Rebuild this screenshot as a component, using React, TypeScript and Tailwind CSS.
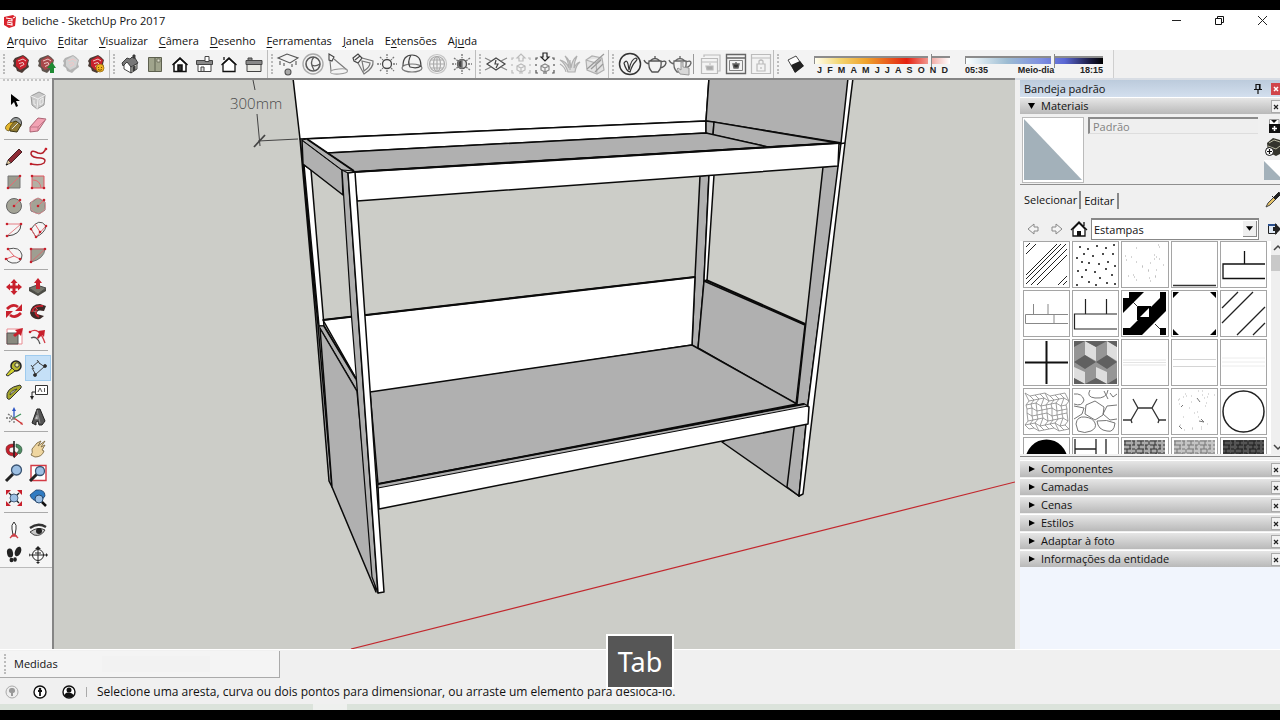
import { useState, type ReactNode } from 'react';

type Tool = { name: string; art: ReactNode };

const MENUS = [
  ['', 'A', 'rquivo'],
  ['', 'E', 'ditar'],
  ['', 'V', 'isualizar'],
  ['', 'C', 'âmera'],
  ['', 'D', 'esenho'],
  ['', 'F', 'erramentas'],
  ['', 'J', 'anela'],
  ['E', 'x', 'tensões'],
  ['Aj', 'u', 'da'],
];

const MONTHS = ['J', 'F', 'M', 'A', 'M', 'J', 'J', 'A', 'S', 'O', 'N', 'D'];
const CLOSED_PANELS = ['Componentes', 'Camadas', 'Cenas', 'Estilos', 'Adaptar à foto', 'Informações da entidade'];

function Svg({ children }: { children: ReactNode }) {
  return (
    <svg viewBox="0 0 24 24" width="24" height="24" fill="none" className="shrink-0" aria-hidden="true">
      {children}
    </svg>
  );
}

/* ---------- horizontal toolbar art ---------- */

const RED = '#c8202c';

function BoxArt({ main = RED, dark = '#4b3a34', children }: { main?: string; dark?: string; children?: ReactNode }) {
  return (
    <>
      <path d="M4 9l2-3 8-3 3 2 3 3-1 4 1 3-4 3-3 3-5-2-1-3-3-2 1-3z" fill={dark} />
      <path d="M7 8l7-4 5 4-2 7-6 3-4-4z" fill={main} />
      <path d="M9 9l5-2 3 2M10 11.500l4-1 1 2-4 2" stroke="#efc8c8" strokeWidth="1" />
      {children}
    </>
  );
}

const warehouse: Tool[] = [
  { name: '3D Warehouse', art: <BoxArt /> },
  {
    name: 'Compartilhar modelo',
    art: (
      <BoxArt main="#a8484a" dark="#5e544e">
        <path d="M16 21v-5h-3l5-6 4 6h-2v5z" fill="#1f8a34" />
      </BoxArt>
    ),
  },
  { name: 'Compartilhar componente', art: <BoxArt main="#d2d2d2" dark="#b3b3b3" /> },
  {
    name: 'Extension Warehouse',
    art: (
      <BoxArt>
        <circle cx="16" cy="16" r="4" fill="#f0b321" stroke="#8c6414" strokeWidth=".7" />
        <path d="M14.500 15v1M17.500 15v1M14 17.500q2 1.500 4 0" stroke="#5b3b00" strokeWidth=".8" />
      </BoxArt>
    ),
  },
];

const views: Tool[] = [
  {
    name: 'Iso',
    art: (
      <g stroke="#333" strokeWidth=".9" strokeLinejoin="round">
        <path d="M6 12v5l7 4v-7L9 9z" fill="#fff" />
        <path d="M13 14l6-3v6l-6 4z" fill="#c5c5bd" />
        <path d="M4 11l5-5 3 1 2-2 3 1 3 5-7 4-4-5-4 4z" fill="#777" />
        <path d="M15 15l2-1v4l-2 1zM15 3h2v3h-2z" fill="#444" />
      </g>
    ),
  },
  {
    name: 'Superior',
    art: (
      <>
        <path d="M5.500 5.500h13v14h-13z" fill="#a0a48c" stroke="#5d604f" />
        <path d="M12 5v15" stroke="#5d604f" />
        <path d="M14 7h3v3h-3z" fill="#dcdccb" stroke="#5d604f" strokeWidth=".7" />
      </>
    ),
  },
  {
    name: 'Frente',
    art: (
      <g stroke="#111" strokeWidth="1.500">
        <path d="M6 12v7.500h12V12l-6-5.500z" fill="#fff" />
        <path d="M4.500 13 12 6l7.500 7" />
        <path d="M10 19v-6h4v6z" fill="#333" />
      </g>
    ),
  },
  {
    name: 'Direita',
    art: (
      <g stroke="#444">
        <path d="M6 12.500h13v7H6z" fill="#fff" />
        <path d="M4.500 8.500h16v4h-16z" fill="#888" />
        <path d="M13 4.500h4v5h-4z" fill="#fff" />
        <path d="M9 15h3v4.500H9z" fill="#ddd" />
      </g>
    ),
  },
  {
    name: 'Voltar',
    art: (
      <g stroke="#111" strokeWidth="1.300">
        <path d="M6 12v7.500h12V12l-6-5.500z" fill="#fff" />
        <path d="M4.500 13 12 6l7.500 7" />
        <path d="M7 8V5" />
      </g>
    ),
  },
  {
    name: 'Esquerda',
    art: (
      <g stroke="#444">
        <path d="M5 12.500h14v7H5z" fill="#e9e9e4" />
        <path d="M4 8.500h16v4H4zM6 6h4v2.500H6z" fill="#888" />
      </g>
    ),
  },
];

const lights: Tool[] = [
  {
    name: 'Luz retangular',
    art: (
      <g stroke="#555" strokeWidth="1.100">
        <path d="M2 6l9-4 11 4-8 5zM4 9v4M20 9v4M8 11v3M16 12v3" />
        <circle cx="12" cy="20" r="3" fill="#a9a9a9" />
      </g>
    ),
  },
  {
    name: 'Luz esférica',
    art: (
      <g stroke="#5a5a5a">
        <circle cx="12" cy="12" r="10" stroke="#aaa" strokeWidth="1.400" />
        <circle cx="12" cy="12" r="7" strokeWidth="1.600" />
        <path d="M13 5q-5 5 0 13M11 13q3 2 8-1" strokeWidth="1.300" />
      </g>
    ),
  },
  {
    name: 'Luz spot',
    art: (
      <g stroke="#777" strokeWidth="1.100">
        <path d="M3 2l5 3-2 4-3-1z" stroke="#444" />
        <path d="M8 7l13 11M4 9l1 10" />
        <ellipse cx="13" cy="19.500" rx="8.500" ry="2.500" stroke="#999" transform="rotate(-5 13 19)" />
      </g>
    ),
  },
  {
    name: 'Luz IES',
    art: (
      <g stroke="#777" strokeWidth="1.200">
        <path d="M2 6l5-4 4 4-4 5-4-2zM4 8l5-4" stroke="#444" />
        <path d="M11 6l11 3q1 7-9 13L7 11M11 9l8 2q0 4-6 8z" />
      </g>
    ),
  },
  {
    name: 'Luz omni',
    art: (
      <g stroke="#777" strokeWidth="1.300">
        <circle cx="12" cy="12" r="4.500" stroke="#444" />
        <path d="M12 2v4M12 18v4M2 12h4M18 12h4M5 5l3 3M16 16l3 3M19 5l-3 3M5 19l3-3" strokeDasharray="2 1" />
      </g>
    ),
  },
  {
    name: 'Luz domo',
    art: (
      <g stroke="#444" strokeWidth="1.200">
        <ellipse cx="12" cy="16" rx="10" ry="4" stroke="#777" />
        <path d="M3 14q0-11 9-11t9 11q-4 3-11 1Q7 10 11 3" />
      </g>
    ),
  },
  {
    name: 'Esfera',
    art: (
      <g stroke="#aaa" strokeWidth="1.200">
        <circle cx="12" cy="12" r="9.500" stroke="#c4c4c4" />
        <circle cx="12" cy="12" r="7.500" />
        <ellipse cx="12" cy="12" rx="3.500" ry="7.500" />
        <path d="M12 4v16M4 12h16M6 8h12M6 16h12" />
      </g>
    ),
  },
  {
    name: 'Intensidade da luz',
    art: (
      <g stroke="#777" strokeWidth="1.400">
        <path d="M12 2v4M12 18v4M2 12h4M18 12h4M4 6l4 3M16 15l4 3M20 6l-4 3M4 18l4-3" strokeDasharray="2 1" />
        <circle cx="12" cy="12" r="4.500" fill="#ddd" stroke="#555" />
        <path d="M12 8a4 4 0 0 0 0 8z" fill="#444" />
      </g>
    ),
  },
];

const corners = 'M3 8V6h2M19 6h2v2M3 18v3h2M21 18v3h-2M3 12v2M21 12v2M10 21h4';

const objects: Tool[] = [
  {
    name: 'Plano infinito',
    art: (
      <g stroke="#444" strokeWidth="1.200">
        <path d="M3 12l9-6 9 6-9 6zM12 8l-1 4h3l-2 4" />
        <path d="M1 6l6 3M17 9l6-3M1 18l6-3M17 15l6 3" stroke="#888" />
      </g>
    ),
  },
  {
    name: 'Exportar proxy',
    art: (
      <g stroke="#bbb" strokeWidth="1.200">
        <path d={corners} />
        <path d="M10 9V6H8l4-4 4 4h-2v3zM8 14l4-2 4 2v4l-4 2-4-2zM8 14l4 2 4-2M12 16v4" />
      </g>
    ),
  },
  {
    name: 'Importar proxy',
    art: (
      <g stroke="#555" strokeWidth="1.200">
        <path d={corners} />
        <path d="M10 1v4H8l4 4 4-4h-2V1z" stroke="#222" />
        <path d="M8 14l4-2 4 2v4l-4 2-4-2zM8 14l4 2 4-2M12 16v4" stroke="#888" />
      </g>
    ),
  },
  {
    name: 'Pelo',
    art: (
      <g stroke="#b0b0b0" strokeWidth="1.200">
        <path d="M10 20Q7 11 2 8q6 1 9 8-1-8-4-12 5 4 6 12 1-8 6-12-3 6-3 12 2-5 6-6-4 3-5 10z" fill="#ddd" />
        <path d="M2 12q5 3 6 8M12 8v10" />
      </g>
    ),
  },
  {
    name: 'Recorte',
    art: (
      <g stroke="#b0b0b0" strokeWidth="1.200">
        <path d="M3 8l6-4 10 2 2 12-7 4-10-4zM3 8l10 3 6-5M13 11l1 11" fill="#e2e2e2" />
        <path d="M4 17L21 2M8 17l10-9M12 20l8-8" stroke="#999" />
      </g>
    ),
  },
];

const pot = 'M6 9h12q1 7-3 11H9Q5 16 6 9zM7 9q5-5 10 0M12 6V4M6 12Q2 11 1 8M18 10q5-2 5 1-1 4-6 5';

const render: Tool[] = [
  {
    name: 'Editor de materiais',
    art: (
      <>
        <circle cx="12" cy="12" r="10.500" stroke="#333" strokeWidth="1.500" />
        <path d="M6 11q3-4 4 1l1 6q2-11 7-12 2 1 0 3-4 4-6 11-4-1-6-9z" stroke="#333" strokeWidth="1.200" />
      </>
    ),
  },
  { name: 'Renderizar', art: <path d={pot} stroke="#555" strokeWidth="1.300" /> },
  {
    name: 'Renderização interativa',
    art: (
      <>
        <path d={pot} stroke="#666" strokeWidth="1.300" />
        <path d="M12 22l-3-5 1-1 3 2v-8h2v5l6 1v7z" fill="#d8d8d8" stroke="#999" />
      </>
    ),
  },
];

const frames: Tool[] = [
  {
    name: 'Lote',
    art: (
      <g stroke="#bbb" strokeWidth="1.200">
        <path d="M5 5V3h16v16h-2M2.500 6.500h16v15h-16zM3 10h15" />
        <path d="M7 14h7v4H8zM10 12h2" fill="#aaa" />
      </g>
    ),
  },
  {
    name: 'Frame buffer',
    art: (
      <g stroke="#666" strokeWidth="1.400">
        <path d="M2.500 2.500h19v19h-19zM3 6h18" />
        <path d="M5.500 8.500h13v10h-13z" strokeWidth=".8" />
        <path d="M9 12h6l-1 4h-4zM12 10v2" fill="#333" />
      </g>
    ),
  },
  {
    name: 'Bloquear orientação',
    art: (
      <g stroke="#bbb" strokeWidth="1.200">
        <path d="M2.500 2.500h19v19h-19zM3 6h18" />
        <path d="M8 12h8v7H8zM10 12V9q2-2 4 0v3M12 15v2" />
      </g>
    ),
  },
];

const shadowTool: Tool = {
  name: 'Sombras',
  art: (
    <>
      <path d="M4 8l8-4 7 10-8 6z" fill="#fff" stroke="#333" strokeWidth=".9" />
      <path d="M7 13l9-4 4 5-9 7z" fill="#222" />
    </>
  ),
};

/* ---------- side toolbar art ---------- */

const dot = (x: number, y: number) => <circle key={`${x}-${y}`} cx={x} cy={y} r="1.300" fill={RED} />;

const sideGroups: Tool[][] = [
  [
    { name: 'Selecionar', art: <path d="M9 6v11l3-3 2 5 2-1-2-5h4z" fill="#000" /> },
    {
      name: 'Criar componente',
      art: (
        <g stroke="#999">
          <path d="M5 8l8-4 6 3-1 10-7 4-5-4z" fill="#c9c9c9" />
          <path d="M5 8l7 3 7-4M12 11l-1 10M8 12v4l2 1M14 12l3-2v5l-3 2z" stroke="#eee" />
        </g>
      ),
    },
    {
      name: 'Pintura',
      art: (
        <>
          <circle cx="14" cy="10" r="5.500" fill="#9a9f9f" stroke="#333" />
          <path d="M7 11l7-3 5 4-4 7-7-1z" fill="#8f7a33" stroke="#3b3412" />
          <path d="M4 13q2-4 8-4-4 3-5 9-5-1-3-5z" fill="#e6b82e" stroke="#5c4a12" strokeWidth=".7" />
          <path d="M10 16l6-6" stroke="#ddd" />
        </>
      ),
    },
    {
      name: 'Borracha',
      art: (
        <>
          <path d="M4 14l8-9 8 1-8 12-8 1z" fill="#f2a3b4" stroke="#a35a6a" strokeWidth=".9" />
          <path d="M4 14h8l8-8M12 14v4" stroke="#c4788a" />
        </>
      ),
    },
  ],
  [
    {
      name: 'Linha',
      art: (
        <>
          <path d="M6 15L17 4l3 3L9 18z" fill="#8f2b35" stroke="#3a1518" strokeWidth=".9" />
          <path d="M6 15l3 3-5 2z" fill="#e5c99a" stroke="#333" strokeWidth=".7" />
          <path d="M4 20l2-1" stroke="#000" />
        </>
      ),
    },
    {
      name: 'Mão livre',
      art: (
        <>
          <path d="M5 19q9 2 13-1 3-4-3-5-9 0-10-4 0-5 7-1 6 2 8-5" stroke="#b4202a" strokeWidth="1.500" />
          {dot(5, 19)}
          {dot(20, 4)}
        </>
      ),
    },
    {
      name: 'Retângulo',
      art: (
        <>
          <path d="M6 6h12v12H6z" fill="#9b9b8e" stroke="#777" />
          <path d="M6 18L18 6" stroke="#e76b73" />
          {dot(6, 18)}
          {dot(18, 6)}
        </>
      ),
    },
    {
      name: 'Retângulo girado',
      art: (
        <>
          <path d="M6 6h12v12H6z" fill="#b4b0a4" stroke="#e0555e" />
          <path d="M7 10q7 0 8 8" stroke="#e76b73" />
          {[[6, 6], [6, 18], [18, 18]].map(([x, y]) => dot(x, y))}
        </>
      ),
    },
    {
      name: 'Círculo',
      art: (
        <>
          <circle cx="12" cy="12" r="7.500" fill="#a3a396" stroke="#666" />
          <path d="M12 12l5-5" stroke="#e76b73" />
          {dot(12, 12)}
          {dot(18, 6)}
        </>
      ),
    },
    {
      name: 'Polígono',
      art: (
        <>
          <path d="M12 4l7 4v8l-6 4-8-3-1-8z" fill="#a3a396" stroke="#777" />
          <circle cx="12" cy="12" r="7.500" stroke="#e58b90" strokeWidth=".8" />
          <path d="M12 12l5-5" stroke="#e76b73" />
          {dot(12, 12)}
          {dot(18, 6)}
        </>
      ),
    },
    {
      name: 'Arco',
      art: (
        <>
          <path d="M5 6h14L5 18" stroke="#e57f85" />
          <path d="M19 6q0 11-14 12" stroke="#444" />
          {[[5, 6], [19, 6], [5, 18]].map(([x, y]) => dot(x, y))}
        </>
      ),
    },
    {
      name: 'Arco de 2 pontos',
      art: (
        <>
          <path d="M5 11Q13-1 20 8q-1 7-10 11z" stroke="#555" />
          <path d="M5 11l5 8L20 8M9 6l5 8" stroke="#e0636b" />
          {[[5, 11], [10, 19], [20, 8], [14, 14]].map(([x, y]) => dot(x, y))}
        </>
      ),
    },
    {
      name: 'Arco de 3 pontos',
      art: (
        <>
          <path d="M6 6q12-3 14 6 0 9-10 8-5-1-6-5" stroke="#555" />
          <path d="M6 6l6 7 6 3M12 13l-8 3" stroke="#e0636b" />
          {[[6, 6], [18, 16], [4, 16]].map(([x, y]) => dot(x, y))}
        </>
      ),
    },
    {
      name: 'Pizza',
      art: (
        <>
          <path d="M5 6h14q-1 10-14 13z" fill="#9e9e91" stroke="#777" />
          <path d="M5 6h14L5 19z" stroke="#e0636b" strokeWidth=".8" />
          {[[5, 6], [19, 6], [5, 19]].map(([x, y]) => dot(x, y))}
        </>
      ),
    },
  ],
  [
    {
      name: 'Mover',
      art: (
        <path
          d="M12 4l3.500 4h-2v2.500H16v-2l4 3.500-4 3.500v-2h-2.500V16h2L12 20l-3.500-4h2v-2.500H8v2L4 12l4-3.500v2h2.500V8h-2z"
          fill={RED}
        />
      ),
    },
    {
      name: 'Empurrar/Puxar',
      art: (
        <>
          <path d="M3 13l8-3 9 3-8 6z" fill="#77776c" stroke="#333" strokeWidth=".8" />
          <path d="M3 13v3l9 5 8-5v-3l-8 6z" fill="#4b4b44" />
          <path d="M10 14V8H8l4-5 4 5h-2v6z" fill={RED} />
        </>
      ),
    },
    {
      name: 'Rotacionar',
      art: (
        <g stroke={RED} strokeWidth="2.800">
          <path d="M5 10q6-6 11-2M19 14q-6 6-11 2" />
          <path d="M20 5v7h-7zM4 19v-7h7z" fill={RED} stroke="none" />
        </g>
      ),
    },
    {
      name: 'Siga-me',
      art: (
        <>
          <path d="M4 14Q5 5 14 5l6 2-2 5q-8-2-7 3l7 2-4 3q-8 1-10-6z" fill="#3c2a28" />
          <path d="M6 13Q8 6 17 7M11 10q-4 4 2 8" stroke={RED} strokeWidth="1.800" />
          <path d="M9 8l3 3M7 12l4 1" stroke="#a88" strokeWidth=".8" />
        </>
      ),
    },
    {
      name: 'Escala',
      art: (
        <>
          <path d="M5 5h15v15H5z" fill="#fff" stroke="#e88c92" />
          <path d="M5 9h11v11H5z" fill="#8a8a7f" stroke="#555" />
          <path d="M13 13l-2-2 4-3-2-2 8-2-2 8-2-2z" fill={RED} />
        </>
      ),
    },
    {
      name: 'Equidistância',
      art: (
        <>
          <path d="M4 8q9-6 15 11" stroke="#d33a44" strokeWidth="1.300" />
          <path d="M5 14q6-3 9 6" stroke="#555" strokeWidth="1.300" />
          <path d="M11 14l2-5-1-2 7-1-1 7-2-2-4 4z" fill={RED} />
          {dot(4, 8)}
        </>
      ),
    },
  ],
  [
    {
      name: 'Fita métrica',
      art: (
        <>
          <circle cx="14" cy="10" r="5" fill="#b7b72e" stroke="#222" strokeWidth="1.500" />
          <circle cx="15" cy="9" r="2.200" fill="#ecec9c" stroke="#333" />
          <path d="M10 12l3 3-7 5-2-1z" fill="#d3d32b" stroke="#333" />
        </>
      ),
    },
    {
      name: 'Dimensões',
      art: (
        <g stroke="#444" strokeWidth="1">
          <path d="M6 11l7-6M5 9l3 4M11 4l3 4M9 19L19 10M6 12l4 7M13 7l6 4" />
          <circle cx="9" cy="19" r="1.500" fill="#222" />
          <circle cx="19" cy="10" r="1.500" fill="#222" />
        </g>
      ),
    },
    {
      name: 'Transferidor',
      art: (
        <>
          <path d="M5 18Q3 8 18 5q2 1 1 3L8 19q-2 1-3-1z" fill="#a6a72c" stroke="#333" />
          <path d="M8 15q0-4 7-6z" fill="#f4f4ef" stroke="#333" strokeWidth=".8" />
        </>
      ),
    },
    {
      name: 'Texto',
      art: (
        <>
          <path d="M9.500 5.500h12v9h-12z" fill="#fff" stroke="#333" />
          <path d="M12 12l2-4 2 4M18.500 8v4" stroke="#555" />
          <path d="M9 12H6v6" stroke="#222" />
          <path d="M4 16l2 4 2-4z" fill="#222" />
        </>
      ),
    },
    {
      name: 'Eixos',
      art: (
        <g strokeWidth="1.300">
          <path d="M12 13V5" stroke="#2d55c4" />
          <path d="M12 13l7 5" stroke="#c33" />
          <path d="M12 13l7-4" stroke="#3b8f57" />
          <path d="M4 13h8M12 13v6M6 9l6 4-5 4" stroke="#777" strokeDasharray="2 1" />
          <path d="M10 6l2-4 2 4z" fill="#2d55c4" />
          <path d="M18 19l3 1-1-3z" fill="#c33" />
        </g>
      ),
    },
    {
      name: 'Texto 3D',
      art: (
        <>
          <path d="M6 18L11 4h3l5 12-3 4h-3l-1-4-2 1v3z" fill="#555" stroke="#222" />
          <path d="M11 5l3 13M9 14h3l-1-4z" stroke="#999" fill="#ccc" strokeWidth=".8" />
        </>
      ),
    },
  ],
  [
    {
      name: 'Orbitar',
      art: (
        <>
          <path d="M4 12q0-5 8-5v3q-5 0-5 3t5 3v-2l4 3-4 4v-2q-8 0-8-7z" fill={RED} stroke="#5b1519" strokeWidth=".6" />
          <path d="M20 13q0-5-6-6v3q3 1 3 3l-2 3 3 1q2-2 2-4z" fill="#4f8d63" stroke="#23452f" strokeWidth=".6" />
          <path d="M12 4v16" stroke="#222" strokeWidth="1.600" />
        </>
      ),
    },
    {
      name: 'Panorâmica',
      art: (
        <path
          d="M5 18q2-2 1-6l5-6 4-2-3 5 7-5-4 6 4-2-3 5 2 1q-2 6-9 6z"
          fill="#efd6a0"
          stroke="#7d6a44"
          strokeWidth=".9"
        />
      ),
    },
    {
      name: 'Zoom',
      art: (
        <>
          <path d="M4 20l7-7" stroke="#222" strokeWidth="3" />
          <circle cx="14.500" cy="9" r="5" fill="#9dc0e4" stroke="#3a5473" strokeWidth="1.300" />
        </>
      ),
    },
    {
      name: 'Janela de zoom',
      art: (
        <>
          <path d="M5 4.500h15v15H5z" fill="#fff" stroke="#d33a44" strokeWidth="1.400" />
          <path d="M4 20l7-7" stroke="#222" strokeWidth="3" />
          <circle cx="14" cy="10" r="4.500" fill="#9dc0e4" stroke="#3a5473" strokeWidth="1.300" />
        </>
      ),
    },
    {
      name: 'Modelo centralizado',
      art: (
        <>
          <path d="M7 7l3 3M17 7l-3 3M7 17l3-3M17 17l-3-3" stroke="#222" strokeWidth="1.300" />
          <path d="M4 4h5L4 9zM20 4v5l-5-5zM4 20v-5l5 5zM20 20h-5l5-5z" fill={RED} />
          <circle cx="12" cy="12" r="4" fill="#9dc0e4" stroke="#4a627f" />
        </>
      ),
    },
    {
      name: 'Anterior',
      art: (
        <>
          <path d="M4 9l6-5q9-1 9 6-2 4-7 5-6 0-8-6z" fill="#2f7bc2" stroke="#173a66" strokeWidth=".8" />
          <circle cx="13" cy="13" r="4" fill="#9dc0e4" stroke="#294a70" />
          <path d="M16 16l4 4" stroke="#111" strokeWidth="2.500" />
        </>
      ),
    },
  ],
  [
    {
      name: 'Posicionar câmera',
      art: (
        <>
          <path d="M12 4q3 3 2 7l-1 6h-2l-1-6q-1-4 2-7z" fill="#fff" stroke="#333" />
          <path d="M8 20l4-4 4 4M9 18h6" stroke="#cf4048" strokeWidth="1.400" />
        </>
      ),
    },
    {
      name: 'Girar',
      art: (
        <>
          <path d="M4 10q8-6 16-1" stroke="#333" strokeWidth="2.400" />
          <path d="M4 14q8-6 15-2-4 7-11 5z" fill="#c8c8c8" stroke="#444" />
          <circle cx="13" cy="13" r="3" fill="#222" />
        </>
      ),
    },
    {
      name: 'Passear',
      art: (
        <g fill="#222">
          <ellipse cx="8" cy="10" rx="3" ry="4.500" transform="rotate(-10 8 10)" />
          <ellipse cx="16" cy="8.500" rx="3" ry="5" transform="rotate(22 16 8.500)" />
          <ellipse cx="9.500" cy="17" rx="2" ry="2.200" />
          <ellipse cx="13" cy="16.500" rx="1.800" ry="2.200" />
        </g>
      ),
    },
    {
      name: 'Plano de seção',
      art: (
        <g stroke="#222" strokeWidth="1">
          <circle cx="12" cy="12" r="5.500" fill="#fff" />
          <path d="M4 12h16M12 5v14M9 10h6" />
          <path d="M9 6l3-3 3 3zM4 10v4l-1-2zM20 10l2 2-2 2zM10 19l2 2 2-2z" fill="#222" stroke="none" />
        </g>
      ),
    },
  ],
];

/* ---------- material swatches ---------- */

function scatter(count: number, seed: number) {
  const out: [number, number][] = [];
  let s = seed;
  for (let i = 0; i < count; i++) {
    s = (s * 9301 + 49297) % 233280;
    const x = 2 + Math.floor((s / 233280) * 41);
    s = (s * 9301 + 49297) % 233280;
    out.push([x, 2 + Math.floor((s / 233280) * 41)]);
  }
  return out;
}

const DOTS: [number, number][] = [
  [7, 5], [15, 7], [24, 4], [33, 6], [41, 3], [11, 12], [20, 14], [30, 12], [40, 12], [4, 16], [16, 21], [9, 20],
  [26, 22], [35, 20], [42, 24], [5, 29], [13, 28], [22, 30], [33, 27], [39, 33], [9, 35], [27, 36], [16, 40], [34, 41],
  [4, 43], [42, 42], [23, 43],
];

// crooked grid of little stones: shared corners, every second joint shifted
function rubble() {
  const pt = (r: number, c: number) => {
    const x = 2 + c * 5 + (r % 2) * 2 + ((r * 5 + c * 3) % 3) - 1;
    const y = 5 + r * 5 + ((r * 3 + c * 7) % 4) - 1;
    return `${x} ${y}`;
  };
  let d = '';
  for (let r = 0; r < 8; r++) {
    d += `M${pt(r, 0)}`;
    for (let c = 1; c < 9; c++) d += `L${pt(r, c)}`;
    if (r < 7) for (let c = 0; c < 9; c++) d += `M${pt(r, c)}L${pt(r + 1, c)}`;
  }
  return d;
}

function Bricks({ base, line }: { base: string; line: string }) {
  return (
    <>
      <path d="M2 2h41v41H2z" fill={base} />
      {Array.from({ length: 10 }, (_, r) => (
        <path
          key={r}
          d={`M2 ${3 + r * 4}h41M${3 + ((r * 5) % 8)} ${3 + r * 4}v4m9-4v4m7-4v4m8-4v4m6-4v4`}
          stroke={line}
          strokeDasharray="7 1 3 2"
        />
      ))}
    </>
  );
}

const SWATCHES: Tool[] = [
  {
    name: 'Hachura diagonal',
    art: <path d="M2 5l4-4M2 12L12 2M2 33L33 2M2 42L42 2M2 37L37 2M7 43L43 7M13 43L43 13M34 43l9-9M39 43l4-4" stroke="#222" />,
  },
  { name: 'Areia', art: DOTS.map(([x, y]) => <circle key={`${x}-${y}`} cx={x} cy={y} r="1" fill="#111" />) },
  { name: 'Areia fina', art: scatter(26, 11).map(([x, y], i) => <path key={i} d={`M${x} ${y}h1`} stroke="#aaa" />) },
  { name: 'Linha', art: <path d="M1 43.500h43" stroke="#333" strokeWidth="1.500" /> },
  { name: 'Bloco', art: <path d="M44 22H2v14.500h42M23.500 22V9" stroke="#111" strokeWidth="1.300" /> },
  { name: 'Tijolo pequeno', art: <path d="M44 23.500H1.500v9H44M30 23.500v9M9.500 23V13M24 23V13" stroke="#888" /> },
  { name: 'Tijolo', art: <path d="M44 23H1.500v15H44M12.500 23V8M33.500 23V8" stroke="#222" strokeWidth="1.200" /> },
  {
    name: 'Marchetaria',
    art: (
      <>
        <path d="M7 1h15L1 22V7h6zM38 1h6v6h-6zM38 7h6v13L20 44H8v-7zM1 37h7v7H1zM38 37h6v7h-6zM15 15h14v14H15z" fill="#000" />
        <path d="M18 26l9-9v9z" fill="#fff" />
        <path d="M11 11l5 5M33 33l5 5" stroke="#333" />
      </>
    ),
  },
  { name: 'Octógono', art: <path d="M1 1h6L1 7zM44 1h-6l6 6zM1 44v-6l6 6zM44 44v-6l-6 6z" fill="#000" /> },
  { name: 'Diagonal larga', art: <path d="M1 17L17 1M1 32L32 1M16 44l28-28M32 44l12-12" stroke="#222" strokeWidth="1.300" /> },
  { name: 'Cruz', art: <path d="M22.500 1v43M1 22.500h43" stroke="#111" strokeWidth="2" /> },
  {
    name: 'Cubos',
    art: (
      <>
        <path d="M1 1h43v43H1z" fill="#969696" />
        <path d="M12 1l11 6v14l-11-6zM34 1l10 6v14l-10-6zM1 27l11 5v12L1 38zM23 27l11 5v12l-11-6z" fill="#dedede" />
        <path d="M1 22l11-7 11 7-11 7zM23 22l11-7 10 7-10 7zM12 1h22l-11 6zM1 1h11L1 7zM34 1h10v6zM1 38l11 6H1zM23 38l11 6H12zM44 38v6H34z" fill="#606060" />
      </>
    ),
  },
  { name: 'Lambril', art: <path d="M1 20h43M1 22.500h43M1 25h43" stroke="#e4e4e4" /> },
  { name: 'Lambril duplo', art: <path d="M1 19.500h43M1 26.500h43" stroke="#d4d4d4" /> },
  { name: 'Lambril claro', art: <path d="M1 18h43M1 22h43M1 26h43" stroke="#ececec" /> },
  { name: 'Pedra miúda', art: <path d={rubble()} stroke="#888" strokeWidth=".8" /> },
  {
    name: 'Pedra grande',
    art: (
      <path
        d="M1 5q8-1 10 6-2 7-10 4M17 1q-4 7 5 8 12 1 13-8M37 4l3 4 4-3M13 16l9-4 9 6-1 8-8 5-10-6zM44 16l-10 1-4 8 7 6 7-1M1 17l10 2-2 6-8 5M3 35q1-8 9-7t10 6-4 8-13 0zM24 32q10-2 18 2-1 10-8 8-9-1-10-10M31 2l4 8"
        stroke="#666"
        strokeWidth=".9"
      />
    ),
  },
  { name: 'Hexágono', art: <path d="M11 10l5 9h14l5-9M16 19L9 31H1M9 31l1 3M30 19l7 12h7M37 31l-1 3" stroke="#333" strokeWidth="1.300" /> },
  {
    name: 'Concreto',
    art: (
      <>
        {scatter(30, 77).map(([x, y], i) => <path key={i} d={`M${x} ${y}h1`} stroke="#bbb" />)}
        <path d="M25 9l3 4M9 18l2-2M27 32l5 1-3-3M7 37l3 3" stroke="#777" />
      </>
    ),
  },
  { name: 'Círculo', art: <circle cx="22.500" cy="22.500" r="20.500" stroke="#222" strokeWidth="1.500" /> },
  { name: 'Disco', art: <circle cx="22.500" cy="22.500" r="21" fill="#000" /> },
  { name: 'Parquete', art: <path d="M2 1v43M23 1v43M33 1v43M2 11h21" stroke="#222" strokeWidth="1.300" /> },
  { name: 'Pedra cinza', art: <Bricks base="#aaa" line="#333" /> },
  { name: 'Pedra clara', art: <Bricks base="#c4c4c4" line="#777" /> },
  { name: 'Pedra escura', art: <Bricks base="#555" line="#1c1c1c" /> },
];

/* ---------- pieces ---------- */

function ToolButton({ tool, active }: { tool: Tool; active?: boolean }) {
  return (
    <button
      type="button"
      aria-label={tool.name}
      className={`flex items-center justify-center overflow-hidden ${active ? 'bg-[#c5e0f7] outline outline-[#9fcbee]' : ''}`}
    >
      <Svg>{tool.art}</Svg>
    </button>
  );
}

function Segment({ tools, width }: { tools: Tool[]; width: string }) {
  return (
    <div className={`flex items-center border-r border-[#bdbdbd] pr-px ${width}`}>
      <span className="mx-[3px] h-5 border-l-2 border-dotted border-[#bbb]" />
      <div className="grid flex-1 auto-cols-fr grid-flow-col">
        {tools.map((t) => (
          <ToolButton key={t.name} tool={t} />
        ))}
      </div>
    </div>
  );
}

const RANGE =
  'm-0 block h-2 w-full appearance-none border-t-2 border-l border-[#8c8c8c] [&::-webkit-slider-thumb]:h-[14px] [&::-webkit-slider-thumb]:w-[4px] [&::-webkit-slider-thumb]:appearance-none [&::-webkit-slider-thumb]:border-r [&::-webkit-slider-thumb]:border-[#888] [&::-webkit-slider-thumb]:bg-[#f4f4f4]';

function ShadowSliders() {
  const [month, setMonth] = useState(86);
  const [hour, setHour] = useState(64);
  return (
    <div className="flex h-full w-[340px] items-center border-r border-[#cfcfcf]">
      <span className="mx-[3px] h-5 border-l-2 border-dotted border-[#bbb]" />
      <div className="ml-0.5 flex">
        <ToolButton tool={shadowTool} />
      </div>
      <div className="ml-[6px] w-[136px] pt-1 font-['Liberation_Sans',sans-serif] text-[9px] leading-[11px] font-bold text-[#222]">
        <input
          type="range"
          aria-label="Data"
          value={month}
          onChange={(e) => setMonth(Number(e.target.value))}
          className={`${RANGE} bg-[linear-gradient(to_right,#fffef0,#f3d774_18%,#eea22c_38%,#e5200f_68%,#f3b5b0_88%,#fff)]`}
        />
        <div className="mt-px flex justify-between pr-0.5 pl-[3px]">
          {MONTHS.map((m, i) => (
            <span key={i}>{m}</span>
          ))}
        </div>
      </div>
      <div className="ml-[15px] w-[138px] pt-1 font-['Liberation_Sans',sans-serif] text-[9px] leading-[11px] font-bold text-[#222]">
        <input
          type="range"
          aria-label="Hora"
          value={hour}
          onChange={(e) => setHour(Number(e.target.value))}
          className={`${RANGE} bg-[linear-gradient(to_right,#fbffff,#9dbcd2_30%,#7f8fe0_55%,#5a67d4_72%,#1c1d45_90%,#000)]`}
        />
        <div className="mt-px flex justify-between">
          <span>05:35</span>
          <span className="pl-3">Meio-dia</span>
          <span className="pl-2">18:15</span>
        </div>
      </div>
    </div>
  );
}

function Bunk() {
  const line = '#0a0a0a';
  return (
    <svg
      viewBox="54 80 961 569"
      preserveAspectRatio="xMidYMid slice"
      className="absolute inset-0 h-full w-full"
      role="img"
      aria-label="beliche"
    >
      <path d="M351 649L1015 482" stroke="#c2272d" strokeWidth="1.200" />
      <g stroke={line} strokeWidth="1.500" strokeLinejoin="round" fill="#b0b0b0">
        {/* back posts */}
        <path d="M700 176L709 175 704 281 698 349 692 345 695 277z" />
        <path d="M709 175L714 175 707 281 704 280z" fill="#fff" />
        <path d="M300 139L303 163 318 325 332 487 329 481 315 310z" />
        <path d="M304 165L311 170 324 326 319 326z" fill="#fff" />
        {/* upper back and side */}
        <path d="M293 78L709 78 706 121 300 139z" fill="#fff" />
        <path d="M709 78L849 78 842 143 706 121z" />
        <path d="M304 139L706 121 706 133 327 153z" fill="#fff" />
        <path d="M706 121L714 122 713 136 706 133z" />
        <path d="M714 122L838 143 768 147 713 135z" />
        <path d="M327 153L706 133 768 147 354 172z" />
        {/* lower box */}
        <path d="M323 320L695 277 692 345 370 393 357 380z" fill="#fff" />
        <path d="M323 320L695 277" strokeWidth="2.200" />
        <path d="M704 281L805 325 796 404 698 348z" />
        <path d="M706 280L805 324" strokeWidth="2.200" />
        <path d="M722 442L799 496 806 424 795 404z" />
        <path d="M370 392L692 345 797 404 378 484z" />
        {/* right leg */}
        <path d="M823 167L839 165 808 404 799 496 787 487 797 404z" />
        <path d="M848 78L853 78 845 143 803 494 799 496 808 404 841 143z" fill="#fff" />
        <path d="M838 144L845 143" />
        {/* front rails */}
        <path d="M354 172L839 143 838 166 357 201z" fill="#fff" />
        <path d="M354 172L839 143" strokeWidth="2.200" />
        <path d="M378 485L804 404 809 407 808 424 379 509z" fill="#fff" />
        <path d="M378 484L804 404 808 406 378 488z" strokeWidth="1" />
        <path d="M378 484L804 404" strokeWidth="1.800" />
        {/* left side */}
        <path d="M320 328L357 391 376 592 332 487z" />
        <path d="M319 326L324 326 356 379 358 392z" strokeWidth="1" />
        <path d="M324 326L356 379" strokeWidth="1.800" />
        <path d="M302 140L342 170 343 195 303 164z" />
        <path d="M302 140L307 139 354 171 342 170z" strokeWidth="1" />
        <path d="M307 139L354 171" strokeWidth="2" />
        {/* front left post */}
        <path d="M342 170L348 173 378 593 372 577 351 310z" strokeWidth="1.200" />
        <path d="M348 173L355 172 384 592 378 593z" fill="#fff" />
      </g>
      <g stroke="#444" fill="none">
        <path d="M253 80l2 10M257 114l3 32M258 141l40-2" strokeWidth="1" />
        <path d="M254 147l11-12" strokeWidth="1.800" />
      </g>
      <text x="230" y="109" fontSize="15" fill="#4a4a4a" fontFamily="'Open Sans', sans-serif" fontWeight="300">
        300mm
      </text>
    </svg>
  );
}

function CloseTab() {
  return (
    <button
      type="button"
      aria-label="Fechar"
      className="h-[13px] w-[9px] shrink-0 border border-r-0 border-[#aaa] bg-[#f2f2f2]"
    >
      <svg viewBox="0 0 8 11" width="8" height="11" aria-hidden="true">
        <path d="M2 4l4 4M6 4L2 8" stroke="#222" strokeWidth="1.200" />
      </svg>
    </button>
  );
}

function PanelHeader({ title, open }: { title: string; open?: boolean }) {
  return (
    <div className="flex h-[17px] items-center border-t border-white bg-linear-to-b from-[#e6e6e6] to-[#b9b9b9]">
      <button type="button" aria-expanded={!!open} className="flex flex-1 items-center pl-2 text-left">
        <svg viewBox="0 0 8 8" width="8" height="8" className="mr-[5px]" aria-hidden="true">
          <path d={open ? 'M0 1h7L3.500 7z' : 'M1 1v6l6-3z'} fill="#000" />
        </svg>
        {title}
      </button>
      <CloseTab />
    </div>
  );
}

function Materials() {
  return (
    <>
      <div className="flex h-[71px] border-b border-[#8e8e8e] pt-[3px]">
        <div className="ml-0.5 h-[66px] w-[62px] border border-[#bbb] bg-white p-px">
          <svg viewBox="0 0 58 60" preserveAspectRatio="none" className="h-[61px] w-full" aria-hidden="true">
            <path d="M0 0v60h58z" fill="#a3b1ba" />
          </svg>
        </div>
        <input
          aria-label="Nome do material"
          readOnly
          value="Padrão"
          className="ml-1 h-[17px] min-w-0 flex-1 border-t-2 border-l-2 border-[#8b8b8b] border-b border-b-[#ddd] bg-[#efefef] pl-[3px] text-[#828282]"
        />
        <div className="ml-[6px] flex w-4 flex-col">
          <button type="button" aria-label="Painel secundário" className="h-[19px]">
            <svg viewBox="0 0 16 19" width="16" height="19" aria-hidden="true">
              <path d="M5.500 2.500H15v5H5.500z" fill="#fff" stroke="#999" />
              <path d="M7 3h6l-3 3z" fill="#111" />
              <path d="M5 7h11v9H5z" fill="#111" />
              <path d="M10.500 9v5M8 11.500h5" stroke="#fff" strokeWidth="1.500" />
            </svg>
          </button>
          <button type="button" aria-label="Criar material" className="h-6">
            <svg viewBox="0 0 16 24" width="16" height="24" aria-hidden="true">
              <path d="M3 7l6-5 7 2v14l-4 2-8-4z" fill="#34342c" />
              <path d="M5 7l5-3 6 2M4 10l8 3 4-3" stroke="#b8b8a0" fill="none" />
              <circle cx="5.500" cy="15.500" r="4" fill="#fff" stroke="#111" />
              <path d="M5.500 13v5M3 15.500h5" stroke="#111" strokeWidth="1.200" />
            </svg>
          </button>
          <svg viewBox="0 0 16 20" width="16" height="20" aria-hidden="true">
            <path d="M0 0h16v20H0z" fill="#fff" />
            <path d="M0 1v19h16v-3z" fill="#a3b1ba" />
          </svg>
        </div>
      </div>

      <div className="flex h-8 items-start pt-[6px]">
        <button type="button" className="h-[18px] border-r-2 border-[#888] pr-0.5 pl-1 leading-[18px]">
          Selecionar
        </button>
        <button type="button" className="mt-0.5 h-[16px] border-r-2 border-[#888] pr-[3px] pl-[3px] leading-[16px]">
          Editar
        </button>
        <button type="button" aria-label="Conta-gotas" className="ml-auto">
          <svg viewBox="0 0 16 18" width="16" height="18" aria-hidden="true">
            <path d="M2 16l2-4 6-6 2 2-6 6z" fill="#e3c26a" stroke="#444" />
            <path d="M8 5l4 4M10 6l5-5 1 3-4 4z" fill="#222" stroke="#222" />
          </svg>
        </button>
      </div>

      <div className="flex h-6 items-center">
        <button type="button" aria-label="Voltar" className="ml-[7px] w-[22px]">
          <svg viewBox="0 0 14 14" width="14" height="14" aria-hidden="true">
            <path d="M1 7l6-5v3h4v4H7v3z" fill="#f4f4f4" stroke="#888" />
          </svg>
        </button>
        <button type="button" aria-label="Avançar" className="w-[21px]">
          <svg viewBox="0 0 14 14" width="14" height="14" aria-hidden="true">
            <path d="M13 7L7 2v3H3v4h4v3z" fill="#f4f4f4" stroke="#888" />
          </svg>
        </button>
        <button type="button" aria-label="No modelo" className="w-[21px]">
          <svg viewBox="0 0 18 18" width="18" height="18" aria-hidden="true">
            <path d="M3 9v7h12V9L9 3z" fill="#fff" stroke="#111" strokeWidth="1.300" />
            <path d="M1 10l8-8 8 8M14 6V2" fill="none" stroke="#111" strokeWidth="1.300" />
            <path d="M7 16v-5h4v5z" fill="#111" />
          </svg>
        </button>
        <div className="relative min-w-0 flex-1">
          <select
            aria-label="Coleção"
            className="block h-[22px] w-full appearance-none border border-t-2 border-[#888] bg-white pl-[2px]"
          >
            <option>Estampas</option>
          </select>
          <span className="pointer-events-none absolute inset-y-[3px] right-0.5 flex w-[14px] items-center justify-center border-r border-b border-[#888] bg-[#efefef]">
            <svg viewBox="0 0 8 5" width="7" height="5" aria-hidden="true">
              <path d="M0 0h8L4 5z" fill="#000" />
            </svg>
          </span>
        </div>
        <button type="button" aria-label="Detalhes" className="ml-[8px] w-[13px]">
          <svg viewBox="0 0 13 14" width="13" height="14" aria-hidden="true">
            <path d="M1.500 2.500h8v9h-8z" fill="#dfe9f5" stroke="#222" />
            <path d="M1 3h9" stroke="#2a4f8d" strokeWidth="2" />
            <path d="M6 5h2V1l5 5v2l-5 5V9H6z" fill="#222" />
          </svg>
        </button>
      </div>

      <div className="flex h-[213px] overflow-hidden bg-white">
        <div className="grid flex-1 grid-cols-5 content-start gap-0.5 pl-[3px]">
          {SWATCHES.map((s) => (
            <button key={s.name} type="button" aria-label={s.name} className="h-[47px] border border-[#a5a5a5] bg-white">
              <svg viewBox="0 0 45 45" width="45" height="45" fill="none" aria-hidden="true">
                {s.art}
              </svg>
            </button>
          ))}
        </div>
        <div className="ml-1 flex w-[9px] flex-col bg-[#efefef]">
          <svg viewBox="0 0 9 14" width="9" height="14" aria-hidden="true">
            <path d="M3 9l4-4 4 4" fill="none" stroke="#444" strokeWidth="1.500" />
          </svg>
          <div className="h-4 bg-[#c9c9c9]" />
          <svg viewBox="0 0 9 14" width="9" height="14" className="mt-auto" aria-hidden="true">
            <path d="M3 5l4 4 4-4" fill="none" stroke="#444" strokeWidth="1.500" />
          </svg>
        </div>
      </div>
      <div className="h-[6px] border-b border-[#eee] bg-[linear-gradient(#f2f2f2_50%,#858585_50%,#858585_70%,#f2f2f2_70%)]" />
    </>
  );
}

function Tray() {
  return (
    <aside className="flex w-[265px] shrink-0 flex-col border-t-2 border-[#d8dde4] bg-[#f0f0f0] pl-[5px]">
      <div className="flex h-[17px] items-center bg-linear-to-b from-[#bccbdc] to-[#d3dfee] pl-1">
        <h2 className="flex-1">Bandeja padrão</h2>
        <button type="button" aria-label="Fixar" className="mr-2">
          <svg viewBox="0 0 10 11" width="10" height="11" aria-hidden="true">
            <path d="M3 1.500h4v5H3zM1 6.500h8M5 7v4M6.500 1v5" fill="none" stroke="#111" strokeWidth="1.200" />
          </svg>
        </button>
        <button type="button" aria-label="Fechar bandeja" className="h-3 w-[9px] bg-[#d0454b]">
          <svg viewBox="0 0 9 12" width="9" height="12" aria-hidden="true">
            <path d="M3 4l4 4M7 4L3 8" stroke="#fff" strokeWidth="1.500" />
          </svg>
        </button>
      </div>
      <PanelHeader title="Materiais" open />
      <Materials />
      <div className="flex flex-col gap-px">
        {CLOSED_PANELS.map((p) => (
          <PanelHeader key={p} title={p} />
        ))}
      </div>
      <div className="flex-1 bg-[#f1f5fd]" />
    </aside>
  );
}

export default function App() {
  return (
    <div className="relative flex h-screen w-full flex-col overflow-hidden border-y-10 border-black bg-[#f0f0f0] font-['Open_Sans',sans-serif] text-[11px] leading-4 text-[#111]">
      <header className="bg-white">
        <div className="flex h-[21px] items-center pl-[3px]">
          <svg viewBox="0 0 14 14" width="14" height="14" aria-hidden="true">
            <path d="M1 3l9-2 3 2-1 9-6 2-5-3z" fill="#d9222c" />
            <path d="M3 4l6 1v2L5 6.500M4 8l5 1v2L4 10M10 4l2-1" stroke="#fff" strokeWidth="1.100" fill="none" />
          </svg>
          <h1 className="ml-[5px] flex-1">beliche - SketchUp Pro 2017</h1>
          <div className="flex items-center gap-8 pr-3">
            <button type="button" aria-label="Minimizar">
              <svg viewBox="0 0 11 11" width="11" height="11" aria-hidden="true">
                <path d="M1 5.500h9" stroke="#222" />
              </svg>
            </button>
            <button type="button" aria-label="Restaurar">
              <svg viewBox="0 0 11 11" width="11" height="11" fill="none" aria-hidden="true">
                <path d="M1.500 3.500h6v6h-6zM3.500 3V1.500h6v6H8" stroke="#111" />
              </svg>
            </button>
            <button type="button" aria-label="Fechar janela">
              <svg viewBox="0 0 11 11" width="11" height="11" aria-hidden="true">
                <path d="M1 1l9 9M10 1l-9 9" stroke="#222" />
              </svg>
            </button>
          </div>
        </div>
        <nav className="flex h-[19px] items-center gap-[11px] pl-[7px]">
          {MENUS.map(([pre, key, post]) => (
            <button key={pre + key + post} type="button">
              {pre}
              <u className="underline-offset-2">{key}</u>
              {post}
            </button>
          ))}
        </nav>
      </header>

      <div className="flex h-7 shrink-0 bg-[#f3f3f3]">
        <Segment tools={warehouse} width="w-[110px]" />
        <Segment tools={views} width="w-[158px]" />
        <Segment tools={lights} width="w-[208px]" />
        <Segment tools={objects} width="w-[133px]" />
        <div className="flex w-[165px] items-center border-r border-[#bdbdbd]">
          <span className="mx-[3px] h-5 border-l-2 border-dotted border-[#bbb]" />
          <div className="grid w-[75px] grid-cols-3">
            {render.map((t) => (
              <ToolButton key={t.name} tool={t} />
            ))}
          </div>
          <span className="mr-[5px] ml-px h-5 border-l border-[#999]" />
          <div className="grid flex-1 grid-cols-3">
            {frames.map((t) => (
              <ToolButton key={t.name} tool={t} />
            ))}
          </div>
        </div>
        <ShadowSliders />
        <div className="flex-1 bg-[#f0f0f0]" />
      </div>

      <main className="flex min-h-0 flex-1">
        <div className="w-[52px] shrink-0 border-t border-[#ddd]">
          <div className="border-b border-[#bbb] bg-[#f5f5f5] px-[2px]">
            <div className="mx-px mb-1 border-t-2 border-dotted border-[#c4c4c4] pt-[3px]" />
            {sideGroups.map((group, i) => (
              <div key={i}>
                {i > 0 && <hr className="mx-0.5 mt-0.5 mb-[5px] border-[#aaa]" />}
                <div
                  className={`grid grid-cols-2 ${
                    group.length === 4 ? 'h-[49px]' : group.length === 6 ? 'h-[73px]' : 'h-[122px]'
                  }`}
                >
                  {group.map((t) => (
                    <ToolButton key={t.name} tool={t} active={t.name === 'Dimensões'} />
                  ))}
                </div>
              </div>
            ))}
          </div>
        </div>
        <div className="relative min-w-0 flex-1 border-t-2 border-l-2 border-[#858585] bg-[#cccdc8]">
          <Bunk />
        </div>
        <Tray />
      </main>

      <div className="flex h-[30px] shrink-0 border-t border-white">
        <div className="my-px flex w-[280px] items-center border-r border-b border-[#aaa] bg-[#f4f4f4]">
          <span className="mx-1 h-5 border-l-2 border-dotted border-[#bbb]" />
          <label htmlFor="medidas" className="ml-1">
            Medidas
          </label>
          <input id="medidas" className="ml-11 w-[108px] bg-[#f2f2f2] outline-none" />
        </div>
      </div>

      <footer className="flex h-[25px] shrink-0 items-center pl-[5px]">
        <svg viewBox="0 0 14 14" width="14" height="14" aria-hidden="true">
          <circle cx="7" cy="7" r="6" fill="#eee" stroke="#aaa" />
          <path d="M7 3a2.500 2.500 0 0 1 1 5v3H6V8a2.500 2.500 0 0 1 1-5z" fill="#999" />
        </svg>
        <svg viewBox="0 0 14 14" width="14" height="14" className="ml-[14px]" aria-hidden="true">
          <circle cx="7" cy="7" r="6" fill="#fff" stroke="#111" strokeWidth="1.400" />
          <circle cx="7" cy="4" r="1.300" fill="#111" />
          <path d="M5 6h4M7 5v6" stroke="#111" strokeWidth="1.800" />
        </svg>
        <svg viewBox="0 0 14 14" width="14" height="14" className="ml-[15px]" aria-hidden="true">
          <circle cx="7" cy="7" r="6" fill="#fff" stroke="#111" strokeWidth="1.400" />
          <circle cx="7" cy="5" r="2.500" fill="#111" />
          <path d="M2.500 11q0-4 4.500-3.500T11.500 11Q7 14 2.500 11z" fill="#111" />
        </svg>
        <span className="mx-[10px] h-[10px] border-l border-[#aaa]" />
        <p className="text-[12px]">
          Selecione uma aresta, curva ou dois pontos para dimensionar, ou arraste um elemento para deslocá-lo.
        </p>
      </footer>
      <div className="flex h-[6px] shrink-0 bg-[#dbe3db]">
        <div className="ml-[313px] w-[34px] bg-[#eef0ee]" />
      </div>

      <kbd className="absolute bottom-[21px] left-1/2 flex h-[55px] w-[68px] -translate-x-1/2 items-center justify-center border-2 border-white bg-[#565656] font-['Noto_Sans',sans-serif] text-[27px] leading-8 text-white">
        Tab
      </kbd>
    </div>
  );
}
